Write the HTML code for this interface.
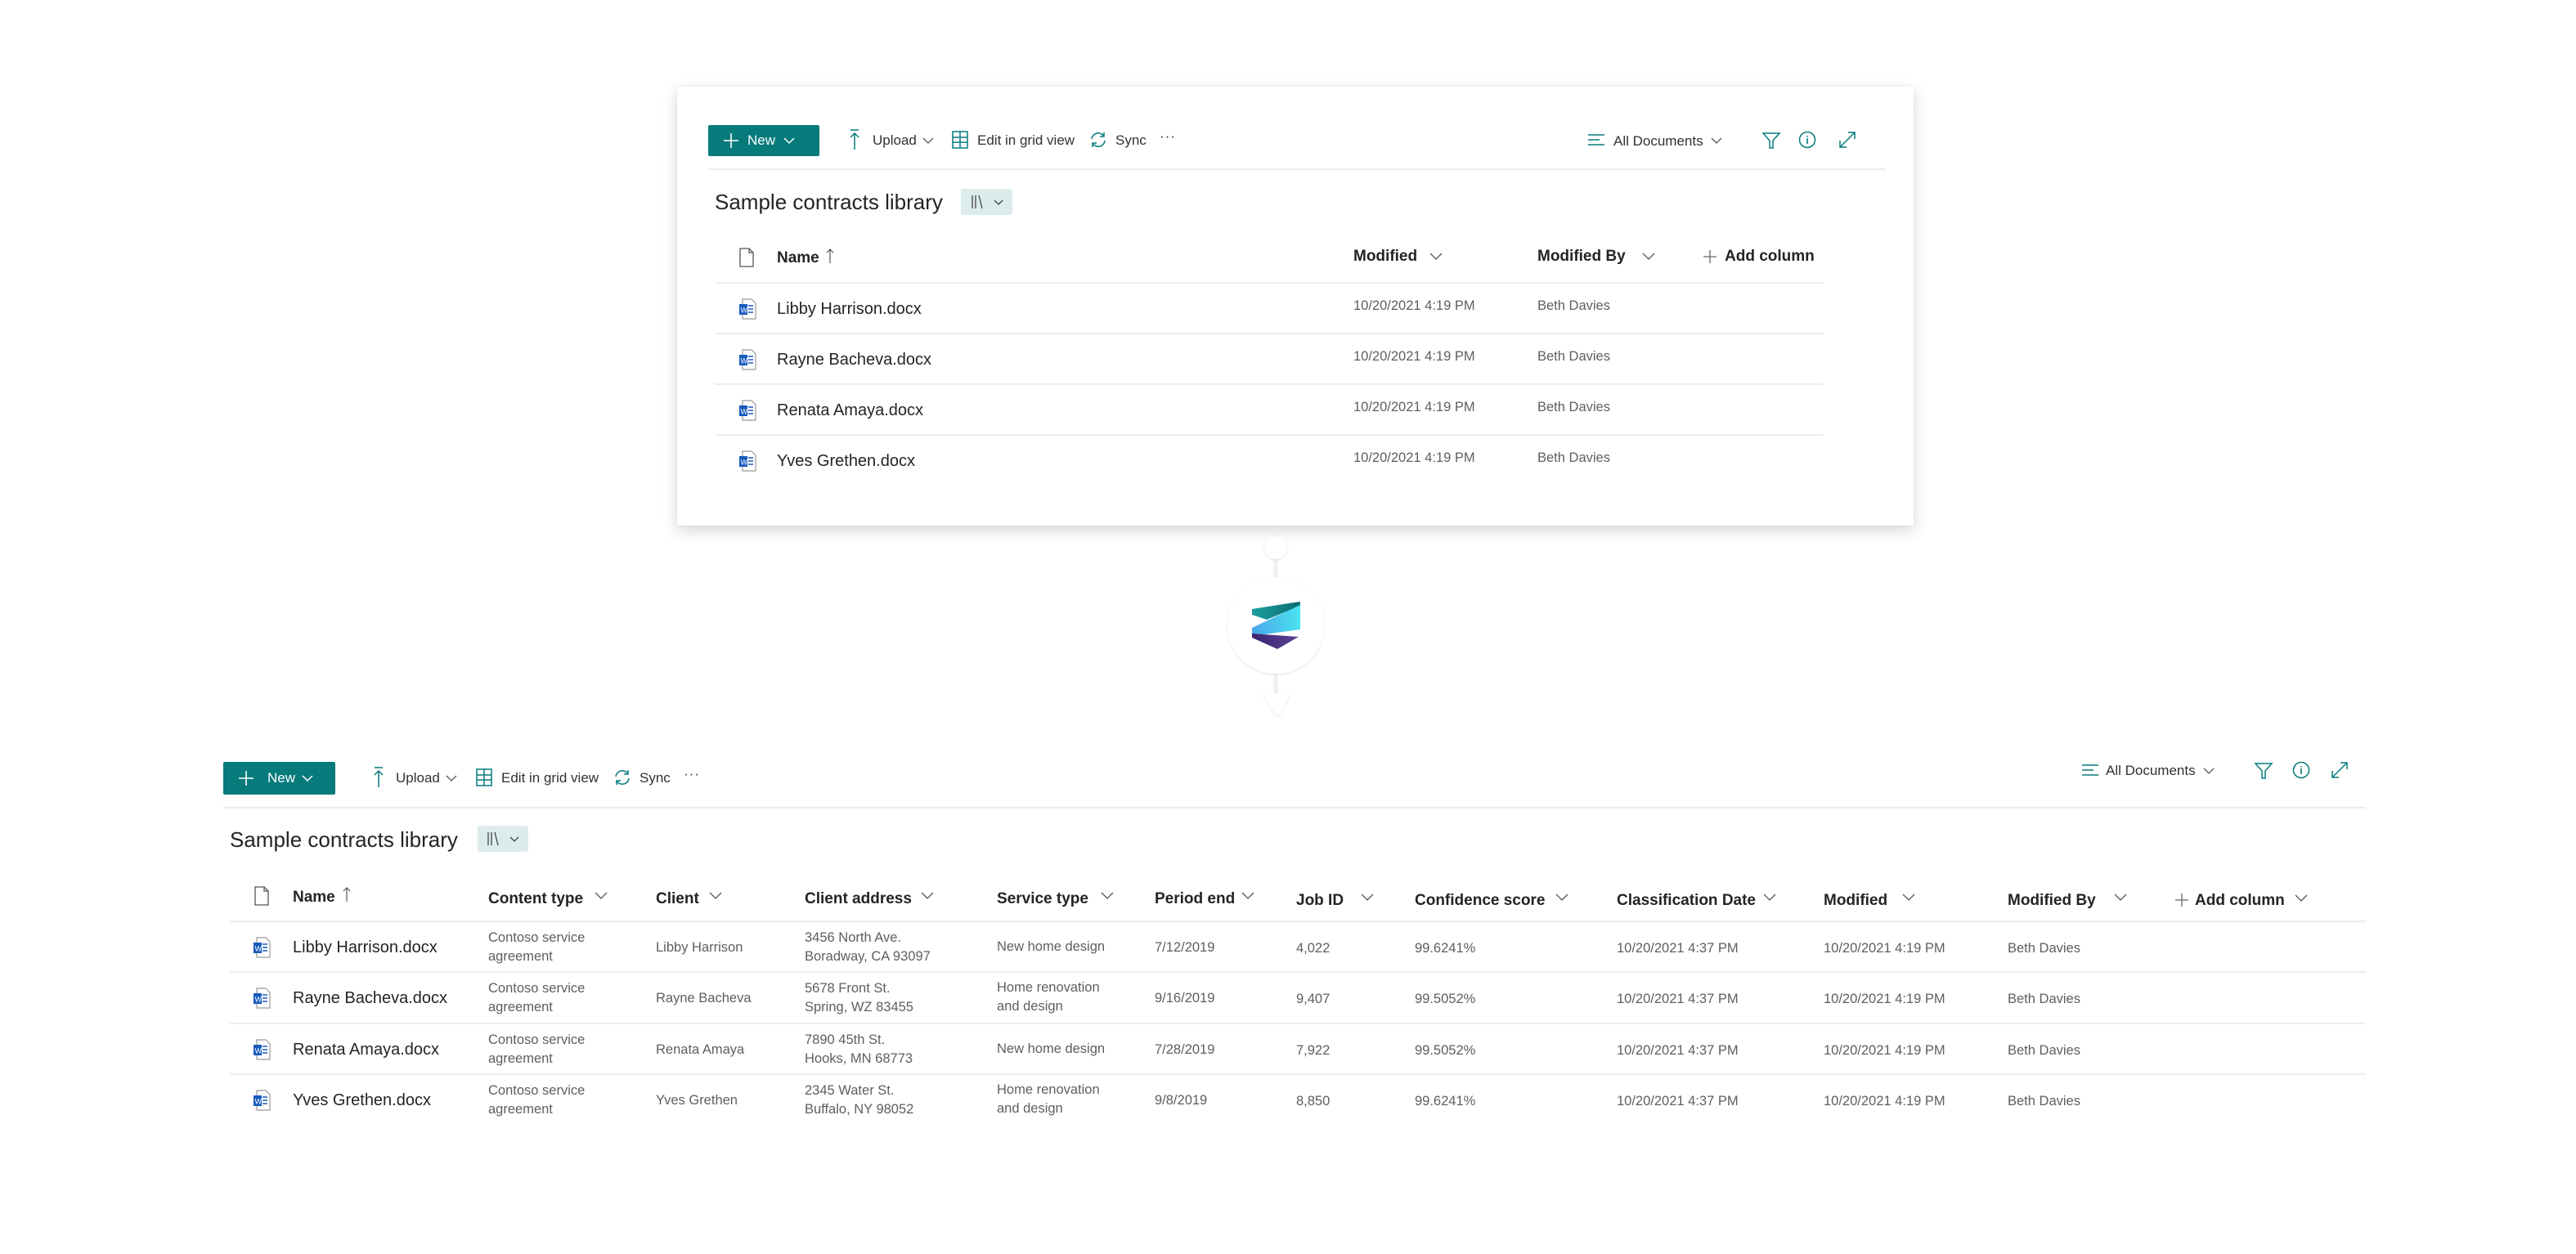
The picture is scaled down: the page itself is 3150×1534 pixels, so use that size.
<!DOCTYPE html>
<html><head><meta charset="utf-8"><style>
*{margin:0;padding:0;box-sizing:border-box}
body{width:3150px;height:1534px;background:#fff;position:relative;overflow:hidden;font-family:"Liberation Sans",Arial,sans-serif;color:#323130}
.a{position:absolute;white-space:nowrap;line-height:1}
.card{position:absolute;left:828px;top:106px;width:1512px;height:537px;background:#fff;box-shadow:0 6px 18px rgba(0,0,0,.16),0 0 3px rgba(0,0,0,.06)}
.new{position:absolute;background:#077a7c;border-radius:2px;color:#fff;font-size:17px}
.tb{font-size:17px;color:#323130}
.h{font-size:19px;font-weight:bold;color:#252423}
.r{font-size:20px;color:#252423}
.s{font-size:16.5px;color:#605e5c}
.s2{font-size:16.5px;color:#605e5c;line-height:23px;white-space:nowrap;position:absolute}
.ln{position:absolute;height:2px;background:#eeedec}
.t{font-size:26px;color:#252423}
.vb{position:absolute;background:#dcecec;border-radius:3px}
svg{position:absolute;overflow:visible}
</style></head><body>

<div class="card"></div>

<div class="new" style="left:866px;top:153px;width:136px;height:38px"></div>
<svg style="left:884px;top:162px" width="20" height="20"><path d="M10 1v18M1 10h18" stroke="#fff" stroke-width="1.6"/></svg>
<span class="a" style="left:914px;top:163px;font-size:17px;color:#fff">New</span>
<svg style="left:958px;top:167px" width="14" height="10"><path d="M1 2l6 6 6-6" stroke="#fff" stroke-width="1.5" fill="none"/></svg>

<svg style="left:1038px;top:158px" width="14" height="26"><path d="M2 1h10M7 25V5M2 10l5-5 5 5" stroke="#077a7c" stroke-width="1.5" fill="none"/></svg>
<span class="a tb" style="left:1067px;top:163px">Upload</span>
<svg style="left:1128px;top:167px" width="14" height="10"><path d="M1 2l6 6 6-6" stroke="#555" stroke-width="1.3" fill="none"/></svg>
<svg style="left:1164px;top:160px" width="20" height="22"><rect x="1" y="1" width="18" height="20" stroke="#077a7c" stroke-width="1.5" fill="none"/><path d="M1 8h18M1 14h18M10 1v20" stroke="#077a7c" stroke-width="1.5"/></svg>
<span class="a tb" style="left:1195px;top:163px">Edit in grid view</span>
<svg style="left:1332px;top:160px" width="22" height="22"><path d="M3 10a8 8 0 0 1 15-3M19 12a8 8 0 0 1-15 3" stroke="#077a7c" stroke-width="1.5" fill="none"/><path d="M18 2v5h-5M4 20v-5h5" stroke="#077a7c" stroke-width="1.5" fill="none"/></svg>
<span class="a tb" style="left:1364px;top:163px">Sync</span>
<span class="a tb" style="left:1418px;top:158px;letter-spacing:1px">···</span>

<svg style="left:1941px;top:163px" width="22" height="16"><path d="M1 2h20M1 8h14M1 14h20" stroke="#077a7c" stroke-width="1.5"/></svg>
<span class="a tb" style="left:1973px;top:164px">All Documents</span>
<svg style="left:2092px;top:167px" width="14" height="10"><path d="M1 2l6 6 6-6" stroke="#555" stroke-width="1.3" fill="none"/></svg>
<svg style="left:2155px;top:161px" width="22" height="22"><path d="M1 2h20l-8 9v9h-4v-9z" stroke="#077a7c" stroke-width="1.5" fill="none"/></svg>
<svg style="left:2199px;top:160px" width="22" height="22"><circle cx="11" cy="11" r="9.5" stroke="#077a7c" stroke-width="1.5" fill="none"/><path d="M11 9v7M11 6v1.5" stroke="#077a7c" stroke-width="1.6"/></svg>
<svg style="left:2248px;top:160px" width="22" height="22"><path d="M2 20L20 2M12 2h8v8M2 12v8h8" stroke="#077a7c" stroke-width="1.5" fill="none"/></svg>

<div class="ln" style="left:866px;top:206px;width:1440px"></div>
<span class="a t" style="left:874px;top:234px">Sample contracts library</span>
<div class="vb" style="left:1175px;top:231px;width:63px;height:32px"></div>
<svg style="left:1187px;top:238px" width="44" height="18"><path d="M2 1v16M6 1v16M10 1l4 16" stroke="#444" stroke-width="1.3" fill="none"/><path d="M29 7l5 5 5-5" stroke="#444" stroke-width="1.3" fill="none"/></svg>

<svg style="left:904px;top:303px" width="18" height="24"><path d="M1 1h11l5 5v17H1z M12 1v5h5" stroke="#555" stroke-width="1.3" fill="none"/></svg>
<span class="a h" style="left:950px;top:306px">Name</span>
<svg style="left:1010px;top:303px" width="10" height="20"><path d="M5 19V2M1 6l4-4 4 4" stroke="#555" stroke-width="1.2" fill="none"/></svg>
<span class="a h" style="left:1655px;top:304px">Modified</span>
<svg style="left:1748px;top:309px" width="16" height="10"><path d="M1 1l7 7 7-7" stroke="#555" stroke-width="1.3" fill="none"/></svg>
<span class="a h" style="left:1880px;top:304px">Modified By</span>
<svg style="left:2008px;top:309px" width="16" height="10"><path d="M1 1l7 7 7-7" stroke="#555" stroke-width="1.3" fill="none"/></svg>
<svg style="left:2083px;top:306px" width="16" height="16"><path d="M8 0v16M0 8h16" stroke="#666" stroke-width="1.3"/></svg>
<span class="a h" style="left:2109px;top:304px">Add column</span>

<div class="ln" style="left:874px;top:345px;width:1356px"></div>
<div class="ln" style="left:874px;top:407px;width:1356px"></div>
<div class="ln" style="left:874px;top:469px;width:1356px"></div>
<div class="ln" style="left:874px;top:531px;width:1356px"></div>

<svg style="left:903px;top:365px" width="22" height="26"><path d="M5 1h11l5 5v19H5z" fill="#fff" stroke="#999" stroke-width="1.2"/><path d="M12 9h6M12 13h6M12 17h6" stroke="#185abd" stroke-width="1.4"/><rect x="1" y="7" width="10" height="13" fill="#185abd"/><text x="2.5" y="17.5" font-size="9" fill="#fff" font-family="Liberation Sans">W</text></svg>
<svg style="left:903px;top:427px" width="22" height="26"><path d="M5 1h11l5 5v19H5z" fill="#fff" stroke="#999" stroke-width="1.2"/><path d="M12 9h6M12 13h6M12 17h6" stroke="#185abd" stroke-width="1.4"/><rect x="1" y="7" width="10" height="13" fill="#185abd"/><text x="2.5" y="17.5" font-size="9" fill="#fff" font-family="Liberation Sans">W</text></svg>
<svg style="left:903px;top:489px" width="22" height="26"><path d="M5 1h11l5 5v19H5z" fill="#fff" stroke="#999" stroke-width="1.2"/><path d="M12 9h6M12 13h6M12 17h6" stroke="#185abd" stroke-width="1.4"/><rect x="1" y="7" width="10" height="13" fill="#185abd"/><text x="2.5" y="17.5" font-size="9" fill="#fff" font-family="Liberation Sans">W</text></svg>
<svg style="left:903px;top:551px" width="22" height="26"><path d="M5 1h11l5 5v19H5z" fill="#fff" stroke="#999" stroke-width="1.2"/><path d="M12 9h6M12 13h6M12 17h6" stroke="#185abd" stroke-width="1.4"/><rect x="1" y="7" width="10" height="13" fill="#185abd"/><text x="2.5" y="17.5" font-size="9" fill="#fff" font-family="Liberation Sans">W</text></svg>

<span class="a r" style="left:950px;top:368px">Libby Harrison.docx</span>
<span class="a r" style="left:950px;top:430px">Rayne Bacheva.docx</span>
<span class="a r" style="left:950px;top:492px">Renata Amaya.docx</span>
<span class="a r" style="left:950px;top:554px">Yves Grethen.docx</span>
<span class="a s" style="left:1655px;top:366px">10/20/2021 4:19 PM</span>
<span class="a s" style="left:1655px;top:428px">10/20/2021 4:19 PM</span>
<span class="a s" style="left:1655px;top:490px">10/20/2021 4:19 PM</span>
<span class="a s" style="left:1655px;top:552px">10/20/2021 4:19 PM</span>
<span class="a s" style="left:1880px;top:366px">Beth Davies</span>
<span class="a s" style="left:1880px;top:428px">Beth Davies</span>
<span class="a s" style="left:1880px;top:490px">Beth Davies</span>
<span class="a s" style="left:1880px;top:552px">Beth Davies</span>

<svg style="left:1460px;top:640px" width="220" height="260">
<defs>
<linearGradient id="g1" x1="0" x2="1"><stop offset="0" stop-color="#1a9fa0"/><stop offset="1" stop-color="#0b6b70"/></linearGradient>
<linearGradient id="g2" x1="0" x2="1"><stop offset="0" stop-color="#4aa5e8"/><stop offset="1" stop-color="#4ae3f0"/></linearGradient>
<linearGradient id="g3" x1="0" x2="1"><stop offset="0" stop-color="#3b2470"/><stop offset="1" stop-color="#5a4595"/></linearGradient>
<filter id="sh" x="-30%" y="-30%" width="160%" height="160%"><feDropShadow dx="0" dy="1" stdDeviation="1.5" flood-color="#000" flood-opacity=".1"/></filter>
</defs>
<path d="M100 40V75M100 180V215" stroke="#f0f0f0" stroke-width="5"/>
<circle cx="100" cy="30" r="14" fill="#fff" filter="url(#sh)"/>
<circle cx="100" cy="125" r="59" fill="#fff" filter="url(#sh)"/>
<path d="M84 208h34l-16 29z" fill="#fff" filter="url(#sh)"/>
<path d="M71 105L129 96Q130 96 130 99L130 101L89 118L71 112Z" fill="url(#g1)"/>
<path d="M71 128L130 100L130 130L71 138Z" fill="url(#g2)"/>
<path d="M71 135L128 139L102 154L71 140Z" fill="url(#g3)"/>
</svg>

<div class="new" style="left:273px;top:932px;width:137px;height:40px"></div>
<svg style="left:291px;top:942px" width="20" height="20"><path d="M10 1v18M1 10h18" stroke="#fff" stroke-width="1.6"/></svg>
<span class="a" style="left:327px;top:943px;font-size:17px;color:#fff">New</span>
<svg style="left:369px;top:947px" width="14" height="10"><path d="M1 2l6 6 6-6" stroke="#fff" stroke-width="1.5" fill="none"/></svg>

<svg style="left:456px;top:938px" width="14" height="26"><path d="M2 1h10M7 25V5M2 10l5-5 5 5" stroke="#077a7c" stroke-width="1.5" fill="none"/></svg>
<span class="a tb" style="left:484px;top:943px">Upload</span>
<svg style="left:545px;top:947px" width="14" height="10"><path d="M1 2l6 6 6-6" stroke="#555" stroke-width="1.3" fill="none"/></svg>
<svg style="left:582px;top:940px" width="20" height="22"><rect x="1" y="1" width="18" height="20" stroke="#077a7c" stroke-width="1.5" fill="none"/><path d="M1 8h18M1 14h18M10 1v20" stroke="#077a7c" stroke-width="1.5"/></svg>
<span class="a tb" style="left:613px;top:943px">Edit in grid view</span>
<svg style="left:750px;top:940px" width="22" height="22"><path d="M3 10a8 8 0 0 1 15-3M19 12a8 8 0 0 1-15 3" stroke="#077a7c" stroke-width="1.5" fill="none"/><path d="M18 2v5h-5M4 20v-5h5" stroke="#077a7c" stroke-width="1.5" fill="none"/></svg>
<span class="a tb" style="left:782px;top:943px">Sync</span>
<span class="a tb" style="left:836px;top:938px;letter-spacing:1px">···</span>

<svg style="left:2545px;top:934px" width="22" height="16"><path d="M1 2h20M1 8h14M1 14h20" stroke="#077a7c" stroke-width="1.5"/></svg>
<span class="a tb" style="left:2575px;top:934px">All Documents</span>
<svg style="left:2694px;top:938px" width="14" height="10"><path d="M1 2l6 6 6-6" stroke="#555" stroke-width="1.3" fill="none"/></svg>
<svg style="left:2757px;top:932px" width="22" height="22"><path d="M1 2h20l-8 9v9h-4v-9z" stroke="#077a7c" stroke-width="1.5" fill="none"/></svg>
<svg style="left:2803px;top:931px" width="22" height="22"><circle cx="11" cy="11" r="9.5" stroke="#077a7c" stroke-width="1.5" fill="none"/><path d="M11 9v7M11 6v1.5" stroke="#077a7c" stroke-width="1.6"/></svg>
<svg style="left:2850px;top:931px" width="22" height="22"><path d="M2 20L20 2M12 2h8v8M2 12v8h8" stroke="#077a7c" stroke-width="1.5" fill="none"/></svg>

<div class="ln" style="left:273px;top:987px;width:2620px"></div>
<span class="a t" style="left:281px;top:1014px">Sample contracts library</span>
<div class="vb" style="left:584px;top:1010px;width:62px;height:32px"></div>
<svg style="left:595px;top:1017px" width="44" height="18"><path d="M2 1v16M6 1v16M10 1l4 16" stroke="#444" stroke-width="1.3" fill="none"/><path d="M29 7l5 5 5-5" stroke="#444" stroke-width="1.3" fill="none"/></svg>

<svg style="left:311px;top:1084px" width="18" height="24"><path d="M1 1h11l5 5v17H1z M12 1v5h5" stroke="#555" stroke-width="1.3" fill="none"/></svg>
<span class="a h" style="left:358px;top:1088px">Name</span>
<svg style="left:419px;top:1084px" width="10" height="20"><path d="M5 19V2M1 6l4-4 4 4" stroke="#555" stroke-width="1.2" fill="none"/></svg>
<span class="a h" style="left:597px;top:1090px">Content type</span>
<svg style="left:727px;top:1091px" width="16" height="10"><path d="M1 1l7 7 7-7" stroke="#555" stroke-width="1.3" fill="none"/></svg>
<span class="a h" style="left:802px;top:1090px">Client</span>
<svg style="left:867px;top:1091px" width="16" height="10"><path d="M1 1l7 7 7-7" stroke="#555" stroke-width="1.3" fill="none"/></svg>
<span class="a h" style="left:984px;top:1090px">Client address</span>
<svg style="left:1126px;top:1091px" width="16" height="10"><path d="M1 1l7 7 7-7" stroke="#555" stroke-width="1.3" fill="none"/></svg>
<span class="a h" style="left:1219px;top:1090px">Service type</span>
<svg style="left:1346px;top:1091px" width="16" height="10"><path d="M1 1l7 7 7-7" stroke="#555" stroke-width="1.3" fill="none"/></svg>
<span class="a h" style="left:1412px;top:1090px">Period end</span>
<svg style="left:1518px;top:1091px" width="16" height="10"><path d="M1 1l7 7 7-7" stroke="#555" stroke-width="1.3" fill="none"/></svg>
<span class="a h" style="left:1585px;top:1092px">Job ID</span>
<svg style="left:1664px;top:1093px" width="16" height="10"><path d="M1 1l7 7 7-7" stroke="#555" stroke-width="1.3" fill="none"/></svg>
<span class="a h" style="left:1730px;top:1092px">Confidence score</span>
<svg style="left:1902px;top:1093px" width="16" height="10"><path d="M1 1l7 7 7-7" stroke="#555" stroke-width="1.3" fill="none"/></svg>
<span class="a h" style="left:1977px;top:1092px">Classification Date</span>
<svg style="left:2156px;top:1093px" width="16" height="10"><path d="M1 1l7 7 7-7" stroke="#555" stroke-width="1.3" fill="none"/></svg>
<span class="a h" style="left:2230px;top:1092px">Modified</span>
<svg style="left:2326px;top:1093px" width="16" height="10"><path d="M1 1l7 7 7-7" stroke="#555" stroke-width="1.3" fill="none"/></svg>
<span class="a h" style="left:2455px;top:1092px">Modified By</span>
<svg style="left:2585px;top:1093px" width="16" height="10"><path d="M1 1l7 7 7-7" stroke="#555" stroke-width="1.3" fill="none"/></svg>
<svg style="left:2660px;top:1093px" width="16" height="16"><path d="M8 0v16M0 8h16" stroke="#666" stroke-width="1.3"/></svg>
<span class="a h" style="left:2684px;top:1092px">Add column</span>
<svg style="left:2806px;top:1094px" width="16" height="10"><path d="M1 1l7 7 7-7" stroke="#555" stroke-width="1.3" fill="none"/></svg>

<div class="ln" style="left:281px;top:1126px;width:2612px"></div>
<div class="ln" style="left:281px;top:1188px;width:2612px"></div>
<div class="ln" style="left:281px;top:1251px;width:2612px"></div>
<div class="ln" style="left:281px;top:1313px;width:2612px"></div>

<svg style="left:309px;top:1146px" width="22" height="26"><path d="M5 1h11l5 5v19H5z" fill="#fff" stroke="#999" stroke-width="1.2"/><path d="M12 9h6M12 13h6M12 17h6" stroke="#185abd" stroke-width="1.4"/><rect x="1" y="7" width="10" height="13" fill="#185abd"/><text x="2.5" y="17.5" font-size="9" fill="#fff" font-family="Liberation Sans">W</text></svg>
<svg style="left:309px;top:1208px" width="22" height="26"><path d="M5 1h11l5 5v19H5z" fill="#fff" stroke="#999" stroke-width="1.2"/><path d="M12 9h6M12 13h6M12 17h6" stroke="#185abd" stroke-width="1.4"/><rect x="1" y="7" width="10" height="13" fill="#185abd"/><text x="2.5" y="17.5" font-size="9" fill="#fff" font-family="Liberation Sans">W</text></svg>
<svg style="left:309px;top:1271px" width="22" height="26"><path d="M5 1h11l5 5v19H5z" fill="#fff" stroke="#999" stroke-width="1.2"/><path d="M12 9h6M12 13h6M12 17h6" stroke="#185abd" stroke-width="1.4"/><rect x="1" y="7" width="10" height="13" fill="#185abd"/><text x="2.5" y="17.5" font-size="9" fill="#fff" font-family="Liberation Sans">W</text></svg>
<svg style="left:309px;top:1333px" width="22" height="26"><path d="M5 1h11l5 5v19H5z" fill="#fff" stroke="#999" stroke-width="1.2"/><path d="M12 9h6M12 13h6M12 17h6" stroke="#185abd" stroke-width="1.4"/><rect x="1" y="7" width="10" height="13" fill="#185abd"/><text x="2.5" y="17.5" font-size="9" fill="#fff" font-family="Liberation Sans">W</text></svg>

<span class="a r" style="left:358px;top:1149px">Libby Harrison.docx</span>
<span class="a r" style="left:358px;top:1211px">Rayne Bacheva.docx</span>
<span class="a r" style="left:358px;top:1274px">Renata Amaya.docx</span>
<span class="a r" style="left:358px;top:1336px">Yves Grethen.docx</span>

<div class="s2" style="left:597px;top:1136px">Contoso service<br>agreement</div>
<div class="s2" style="left:597px;top:1198px">Contoso service<br>agreement</div>
<div class="s2" style="left:597px;top:1261px">Contoso service<br>agreement</div>
<div class="s2" style="left:597px;top:1323px">Contoso service<br>agreement</div>

<span class="a s" style="left:802px;top:1151px">Libby Harrison</span>
<span class="a s" style="left:802px;top:1213px">Rayne Bacheva</span>
<span class="a s" style="left:802px;top:1276px">Renata Amaya</span>
<span class="a s" style="left:802px;top:1338px">Yves Grethen</span>

<div class="s2" style="left:984px;top:1136px">3456 North Ave.<br>Boradway, CA 93097</div>
<div class="s2" style="left:984px;top:1198px">5678 Front St.<br>Spring, WZ 83455</div>
<div class="s2" style="left:984px;top:1261px">7890 45th St.<br>Hooks, MN 68773</div>
<div class="s2" style="left:984px;top:1323px">2345 Water St.<br>Buffalo, NY 98052</div>

<span class="a s" style="left:1219px;top:1150px">New home design</span>
<div class="s2" style="left:1219px;top:1197px">Home renovation<br>and design</div>
<span class="a s" style="left:1219px;top:1275px">New home design</span>
<div class="s2" style="left:1219px;top:1322px">Home renovation<br>and design</div>

<span class="a s" style="left:1412px;top:1151px">7/12/2019</span>
<span class="a s" style="left:1412px;top:1213px">9/16/2019</span>
<span class="a s" style="left:1412px;top:1276px">7/28/2019</span>
<span class="a s" style="left:1412px;top:1338px">9/8/2019</span>

<span class="a s" style="left:1585px;top:1152px">4,022</span>
<span class="a s" style="left:1585px;top:1214px">9,407</span>
<span class="a s" style="left:1585px;top:1277px">7,922</span>
<span class="a s" style="left:1585px;top:1339px">8,850</span>

<span class="a s" style="left:1730px;top:1152px">99.6241%</span>
<span class="a s" style="left:1730px;top:1214px">99.5052%</span>
<span class="a s" style="left:1730px;top:1277px">99.5052%</span>
<span class="a s" style="left:1730px;top:1339px">99.6241%</span>

<span class="a s" style="left:1977px;top:1152px">10/20/2021 4:37 PM</span>
<span class="a s" style="left:1977px;top:1214px">10/20/2021 4:37 PM</span>
<span class="a s" style="left:1977px;top:1277px">10/20/2021 4:37 PM</span>
<span class="a s" style="left:1977px;top:1339px">10/20/2021 4:37 PM</span>

<span class="a s" style="left:2230px;top:1152px">10/20/2021 4:19 PM</span>
<span class="a s" style="left:2230px;top:1214px">10/20/2021 4:19 PM</span>
<span class="a s" style="left:2230px;top:1277px">10/20/2021 4:19 PM</span>
<span class="a s" style="left:2230px;top:1339px">10/20/2021 4:19 PM</span>

<span class="a s" style="left:2455px;top:1152px">Beth Davies</span>
<span class="a s" style="left:2455px;top:1214px">Beth Davies</span>
<span class="a s" style="left:2455px;top:1277px">Beth Davies</span>
<span class="a s" style="left:2455px;top:1339px">Beth Davies</span>

</body></html>
